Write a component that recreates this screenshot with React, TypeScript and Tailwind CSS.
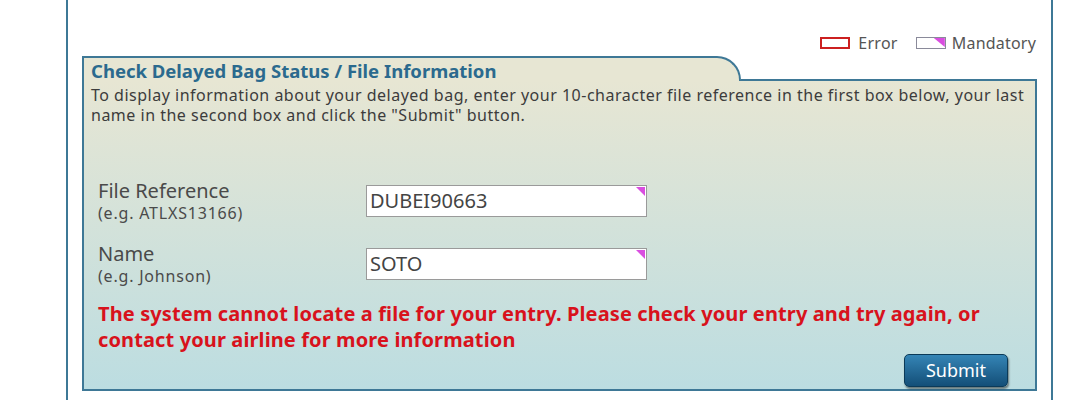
const font = { fontFamily: '"Noto Sans", "Open Sans", sans-serif' };

function Corner() {
  return (
    <span className="absolute right-[1px] top-[1px] w-[9px] h-[9px] bg-[#d94ee0] [clip-path:polygon(0_0,100%_0,100%_100%)]" />
  );
}

function Field({ label, hint, value }: { label: string; hint: string; value: string }) {
  return (
    <div className="flex items-start">
      <div className="w-[268px] text-[#4a4a4a]">
        <div className="text-[20px] leading-[23px]">{label}</div>
        <div className="mt-[2px] text-[16px] leading-[19px] tracking-[0.8px]">{hint}</div>
      </div>
      <div className="relative mt-[6px] w-[281px] h-[32px] bg-white border border-[#9a9a9a] flex items-center pl-[3px] text-[20px] text-[#444]">
        {value}
        <Corner />
      </div>
    </div>
  );
}

export default function App() {
  return (
    <div className="w-[1080px] h-[400px] bg-white overflow-hidden" style={font}>
      <div className="ml-[66px] w-[987px] h-full border-x-2 border-[#3e7896] px-[14px]">
        {/* legend */}
        <div className="h-[56px] flex items-end justify-end pb-[1px] pr-[1px] text-[16px] text-[#555]">
          <div className="flex items-center gap-[8px]">
            <span className="w-[30px] h-[12px] border-2 border-[#cc2020]" />
            <span className="tracking-[0.3px]">Error</span>
          </div>
          <div className="flex items-center gap-[6px] ml-[18px]">
            <span className="relative w-[30px] h-[12px] border border-[#8a8a9a]">
              <span className="absolute right-0 top-0 w-[11px] h-[9px] bg-[#d94ee0] [clip-path:polygon(0_0,100%_0,100%_100%)]" />
            </span>
            <span className="tracking-[0.2px]">Mandatory</span>
          </div>
        </div>

        {/* panel */}
        <div className="flex h-[25px]">
          <div className="w-[659px] border-t-2 border-l-2 border-r-2 border-[#3e7896] rounded-tr-[24px] bg-[#e7e6d3] pl-[7px] pt-[2px] text-[18.5px] leading-[22px] font-bold text-[#2b6a8e]">
            Check Delayed Bag Status / File Information
          </div>
          <div className="flex-1 border-b-2 border-[#3e7896]" />
        </div>
        <div className="h-[310px] border-l-2 border-r-2 border-b-2 border-[#3e7896] bg-gradient-to-b from-[#e7e6d3] to-[#bcdde1]">
          <p className="pl-[7px] pt-[4px] text-[16px] leading-[20px] tracking-[0.5px] text-[#3c3c3c]">
            To display information about your delayed bag, enter your 10-character file reference in the first box below, your last name in the second box and click the "Submit" button.
          </p>
          <div className="pl-[14px] pt-[54px] flex flex-col gap-[19px]">
            <Field label="File Reference" hint="(e.g. ATLXS13166)" value="DUBEI90663" />
            <Field label="Name" hint="(e.g. Johnson)" value="SOTO" />
          </div>
          <p className="pl-[14px] pr-[40px] pt-[15px] text-[20px] leading-[26px] tracking-[0.12px] font-bold text-[#d8121c]">
            The system cannot locate a file for your entry. Please check your entry and try again, or contact your airline for more information
          </p>
          <div className="flex justify-end pr-[27px] pt-[1px]">
            <button className="w-[104px] h-[33px] rounded-[5px] border border-[#0b3a58] bg-gradient-to-b from-[#3585b6] to-[#134f78] text-white text-[18px] shadow-[1px_2px_2px_rgba(0,0,0,0.45)]">
              Submit
            </button>
          </div>
        </div>
      </div>
    </div>
  );
}
